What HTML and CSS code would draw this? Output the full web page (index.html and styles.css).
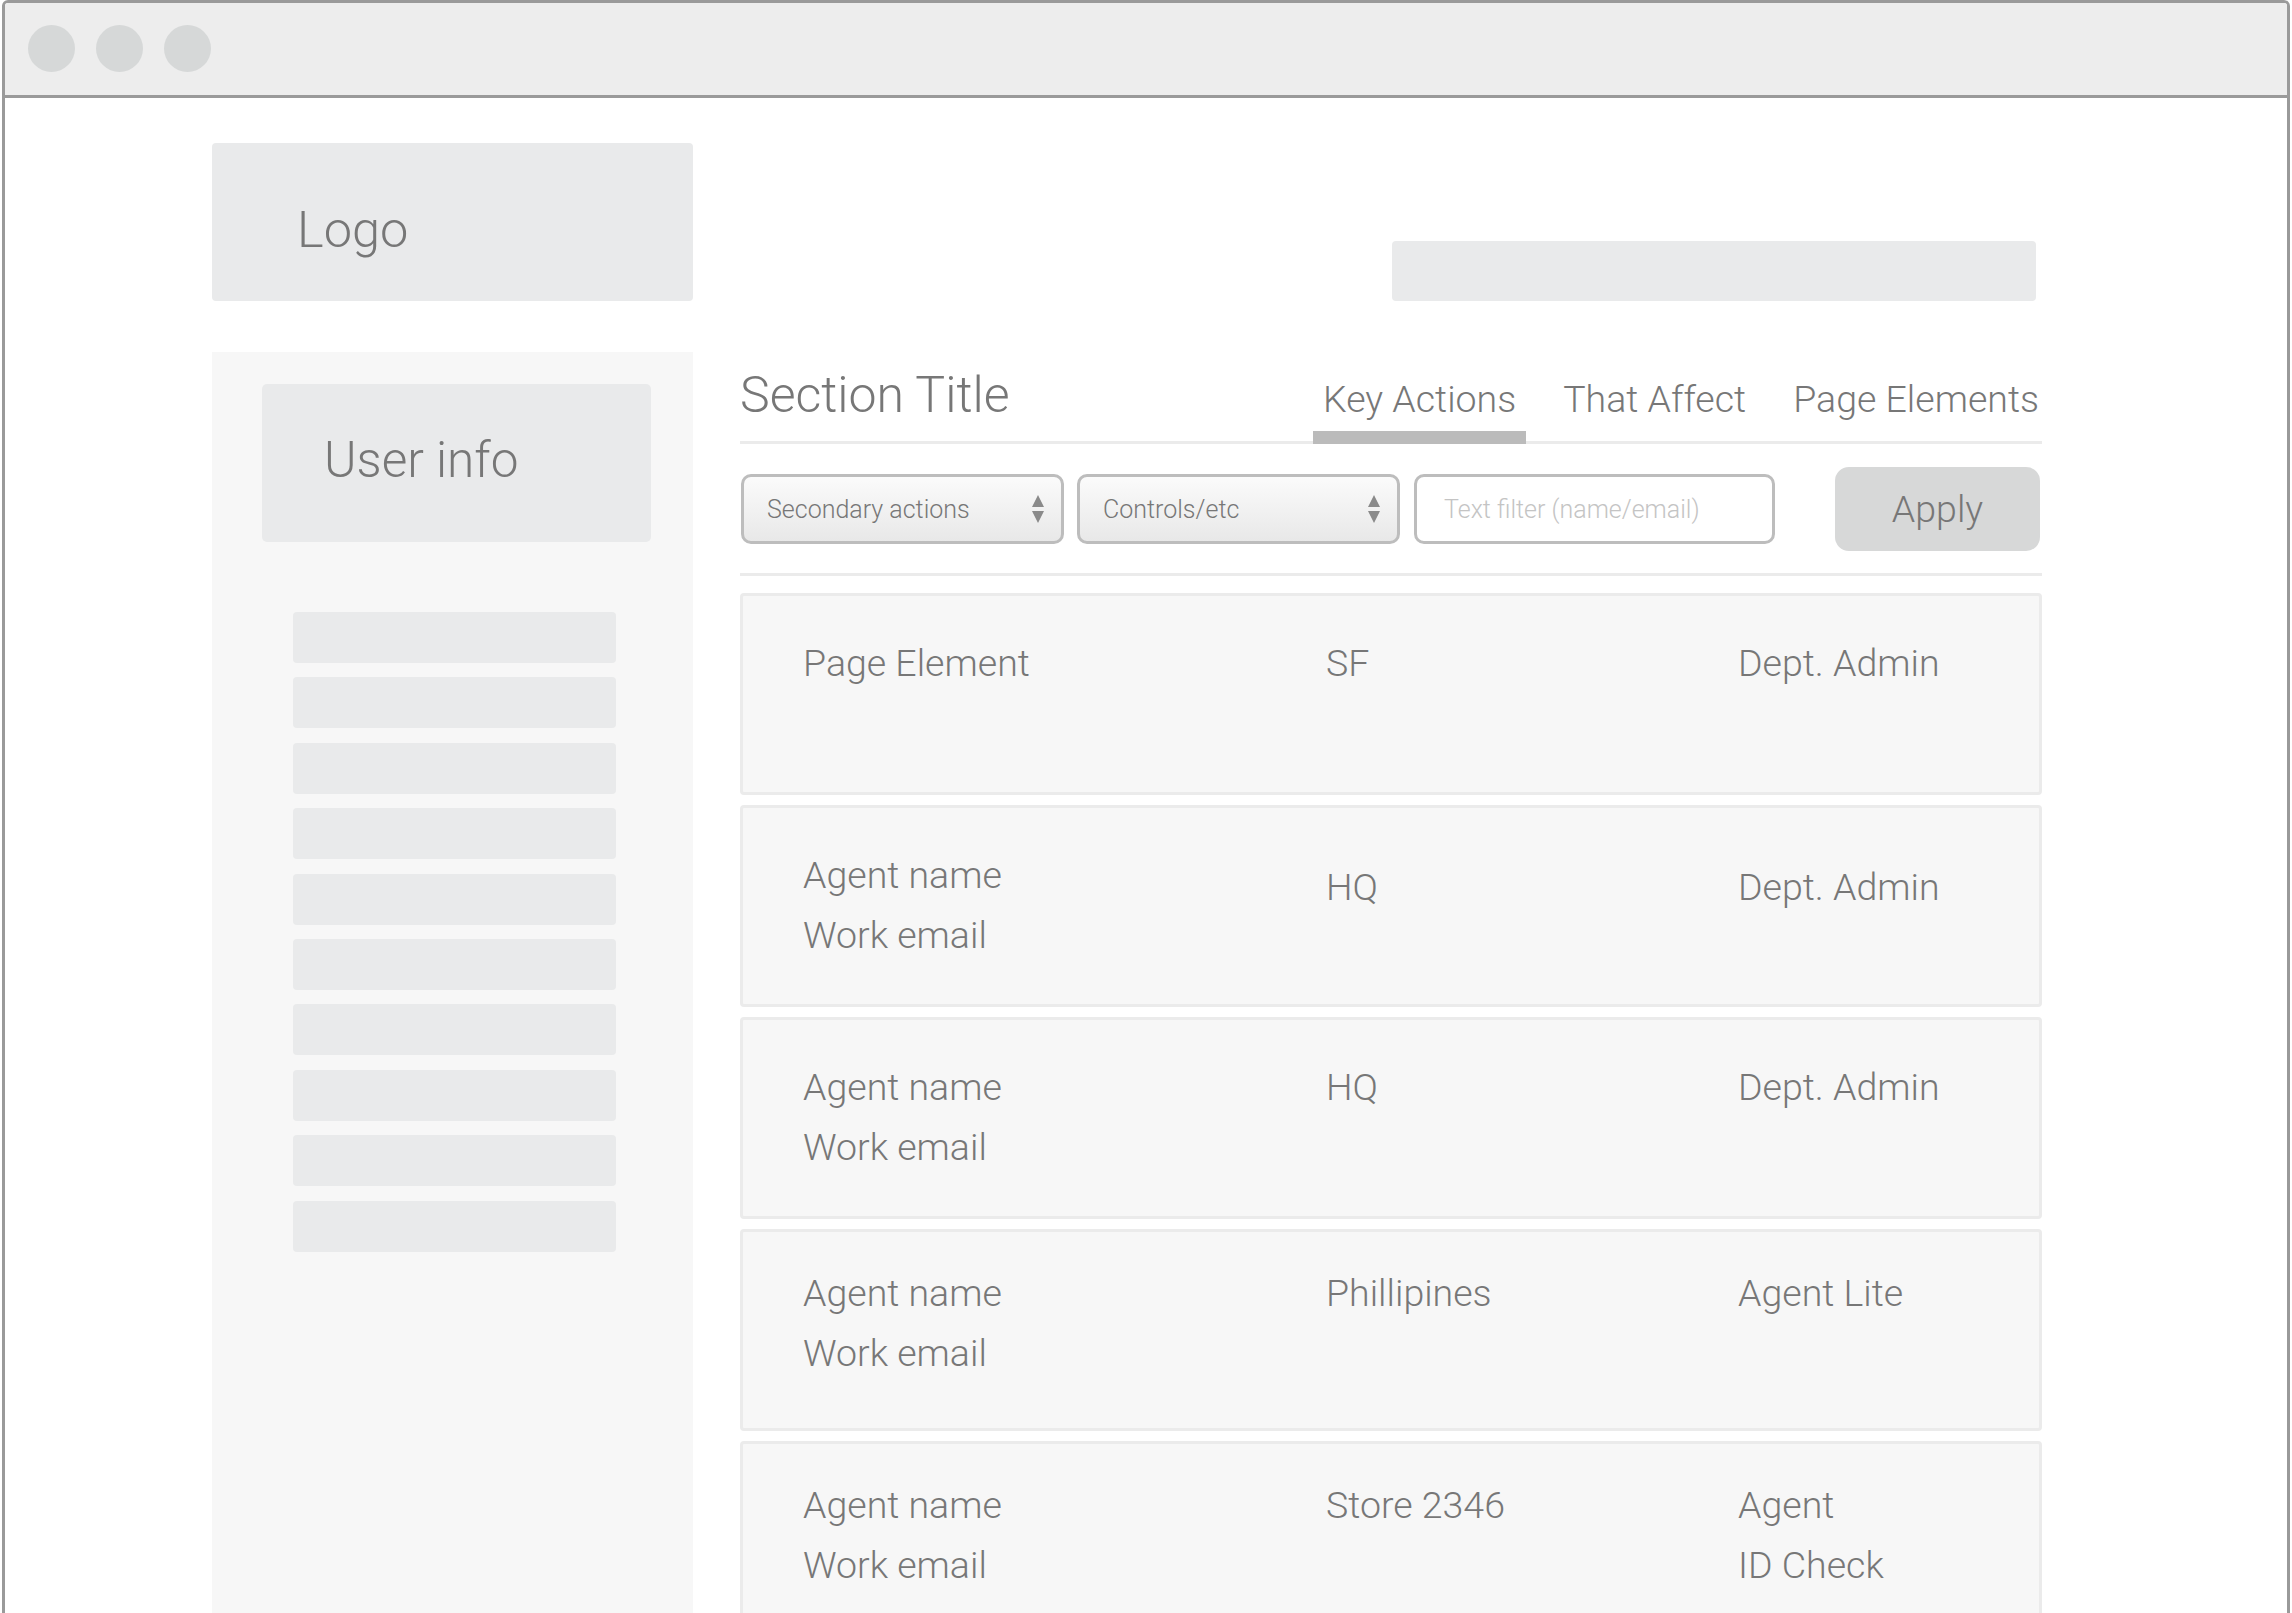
FILE: index.html
```html
<!DOCTYPE html>
<html lang="en">
<head>
<meta charset="utf-8">
<title>Wireframe</title>
<link rel="stylesheet" href="styles.css">
</head>
<body>
<div class="window">
  <div class="titlebar">
    <span class="dot"></span><span class="dot"></span><span class="dot"></span>
  </div>
  <div class="page">
    <header class="top">
      <div class="logo">Logo</div>
      <div class="search"></div>
    </header>
    <div class="layout">
      <aside class="sidebar">
        <div class="userinfo">User info</div>
        <nav class="nav">
          <div class="nav-item"></div>
          <div class="nav-item"></div>
          <div class="nav-item"></div>
          <div class="nav-item"></div>
          <div class="nav-item"></div>
          <div class="nav-item"></div>
          <div class="nav-item"></div>
          <div class="nav-item"></div>
          <div class="nav-item"></div>
          <div class="nav-item"></div>
        </nav>
      </aside>
      <main class="main">
        <div class="head">
          <h1 class="title">Section Title</h1>
          <div class="tabs">
            <span class="tab active">Key Actions</span>
            <span class="tab">That Affect</span>
            <span class="tab">Page Elements</span>
          </div>
        </div>
        <div class="filters">
          <div class="select first"><span>Secondary actions</span>
            <svg class="arrows" width="12" height="28" viewBox="0 0 12 28"><path d="M6 0 L12 12 L0 12 Z M0 16 L12 16 L6 28 Z" fill="#8a8a8a"/></svg>
          </div>
          <div class="select"><span>Controls/etc</span>
            <svg class="arrows" width="12" height="28" viewBox="0 0 12 28"><path d="M6 0 L12 12 L0 12 Z M0 16 L12 16 L6 28 Z" fill="#8a8a8a"/></svg>
          </div>
          <div class="textfilter">Text filter (name/email)</div>
          <div class="apply">Apply</div>
        </div>
        <div class="rows">
          <div class="row">
            <div class="cell">Page Element</div>
            <div class="cell">SF</div>
            <div class="cell">Dept. Admin</div>
          </div>
          <div class="row">
            <div class="cell">Agent name<br>Work email</div>
            <div class="cell low">HQ</div>
            <div class="cell low">Dept. Admin</div>
          </div>
          <div class="row">
            <div class="cell">Agent name<br>Work email</div>
            <div class="cell">HQ</div>
            <div class="cell">Dept. Admin</div>
          </div>
          <div class="row high">
            <div class="cell">Agent name<br>Work email</div>
            <div class="cell">Phillipines</div>
            <div class="cell">Agent Lite</div>
          </div>
          <div class="row high">
            <div class="cell">Agent name<br>Work email</div>
            <div class="cell">Store 2346</div>
            <div class="cell">Agent<br>ID Check</div>
          </div>
        </div>
      </main>
    </div>
  </div>
</div>
</body>
</html>
```

FILE: styles.css
```css
html, body {
  margin: 0;
  padding: 0;
  height: 1613px;
  overflow: hidden;
  background: #ffffff;
}

body {
  font-family: Roboto, "Liberation Sans", sans-serif;
  font-weight: 300;
  color: #777777;
}

.window {
  margin-left: 2px;
  width: 2288px;
  height: 1640px;
  box-sizing: border-box;
  border: 3px solid #9a9a9a;
  border-radius: 6px;
  overflow: hidden;
  background: #ffffff;
}

.titlebar {
  height: 90px;
  box-sizing: content-box;
  background: #ededed;
  border-bottom: 3px solid #9a9a9a;
  display: flex;
  align-items: center;
  gap: 21px;
  padding: 0 0 2px 23px;
}

.dot {
  width: 47px;
  height: 47px;
  border-radius: 50%;
  background: #d6d8d8;
}

.page {
  padding: 45px 0 0 207px;
}

.top {
  display: flex;
  align-items: flex-end;
}

.logo {
  width: 481px;
  height: 158px;
  box-sizing: border-box;
  background: #e9eaeb;
  border-radius: 4px;
  padding: 63px 0 0 85px;
  font-size: 50.5px;
  line-height: 48px;
}

.search {
  margin-left: 699px;
  width: 644px;
  height: 60px;
  background: #e9eaeb;
  border-radius: 4px;
}

.layout {
  display: flex;
  margin-top: 51px;
  gap: 47px;
}

.sidebar {
  width: 481px;
  min-height: 1300px;
  box-sizing: border-box;
  background: #f7f7f7;
  padding-top: 32px;
}

.userinfo {
  margin-left: 50px;
  width: 389px;
  height: 158px;
  box-sizing: border-box;
  background: #e9eaeb;
  border-radius: 5px;
  padding: 52px 0 0 62px;
  font-size: 49.5px;
  line-height: 48px;
}

.nav {
  margin: 70px 0 0 81px;
  display: flex;
  flex-direction: column;
  gap: 14.4px;
}

.nav-item {
  width: 323px;
  height: 51px;
  background: #e9eaeb;
  border-radius: 4px;
}

.main {
  width: 1302px;
}

.head {
  height: 92px;
  box-sizing: border-box;
  display: flex;
  justify-content: space-between;
  align-items: flex-end;
  border-bottom: 3px solid #ebebeb;
}

.title {
  margin: 0 0 22px 0;
  font-size: 50px;
  line-height: 48px;
  font-weight: 300;
}

.tabs {
  display: flex;
  gap: 27px;
  margin-right: -7px;
}

.tab {
  font-size: 37.5px;
  line-height: 36px;
  padding: 0 10px 14px;
  border-bottom: 13px solid transparent;
  margin-bottom: -3px;
}

.tab.active {
  border-bottom-color: #bbbbbb;
}

.filters {
  display: flex;
  align-items: center;
  padding: 23px 0 22px;
  border-bottom: 3px solid #ebebeb;
}

.select {
  width: 323px;
  height: 70px;
  box-sizing: border-box;
  border: 3px solid #bdbdbd;
  border-radius: 10px;
  background: linear-gradient(#fbfbfb, #e8e8e8);
  display: flex;
  align-items: center;
  justify-content: space-between;
  padding: 0 17px 0 23px;
  font-size: 25px;
  margin-left: 13px;
}

.select.first {
  margin-left: 1px;
}

.arrows {
  display: block;
}

.textfilter {
  margin-left: 14px;
  width: 361px;
  height: 70px;
  box-sizing: border-box;
  border: 3px solid #bdbdbd;
  border-radius: 10px;
  background: #ffffff;
  display: flex;
  align-items: center;
  padding-left: 27px;
  font-size: 25px;
  color: #c4c4c4;
}

.apply {
  margin-left: 60px;
  width: 205px;
  height: 84px;
  border-radius: 14px;
  background: #d7d8d8;
  display: flex;
  align-items: center;
  justify-content: center;
  font-size: 37.5px;
}

.rows {
  padding-top: 17px;
  display: flex;
  flex-direction: column;
  gap: 10px;
}

.row {
  height: 202px;
  box-sizing: border-box;
  border: 3px solid #ebebeb;
  border-radius: 4px;
  background: #f7f7f7;
  display: grid;
  grid-template-columns: 523px 412px 1fr;
  align-content: start;
  padding: 37px 0 0 60px;
  font-size: 37.5px;
  line-height: 60px;
}

.row.high {
  padding-top: 31px;
}

.cell.low {
  padding-top: 12px;
}
```
